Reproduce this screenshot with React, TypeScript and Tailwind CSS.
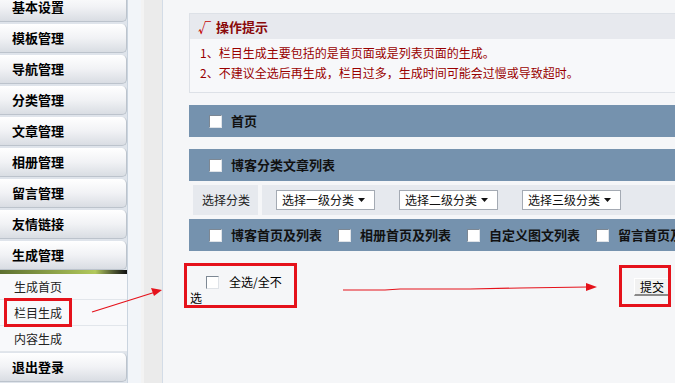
const menus = ['基本设置', '模板管理', '导航管理', '分类管理', '文章管理', '相册管理', '留言管理', '友情链接']
const subMenus = ['生成首页', '栏目生成', '内容生成']
const listItems = ['博客首页及列表', '相册首页及列表', '自定义图文列表', '留言首页及列表']
const selects = ['选择一级分类', '选择二级分类', '选择三级分类']

function MenuButton({ label, last }: { label: string; last?: boolean }) {
  return (
    <div
      className={`h-[29px] ${last ? '' : 'mb-[2px]'} flex items-center pl-[12px] rounded-r-[5px] border-r border-b border-[#bcc3cc] bg-linear-to-b from-white via-[#f1f2f5] to-[#d9dde3] text-[13px] font-bold text-black`}
    >
      {label}
    </div>
  )
}

function Box() {
  return (
    <span className="inline-block w-[13px] h-[13px] shrink-0 bg-white border border-t-[#7d8894] border-l-[#7d8894] border-r-[#dfe3e8] border-b-[#dfe3e8]" />
  )
}

function FakeSelect({ label }: { label: string }) {
  return (
    <div className="w-[99px] h-[20px] shrink-0 bg-white border border-[#a4aab3] flex items-center pl-[5px] text-[12px] text-[#111]">
      <span className="flex-1">{label}</span>
      <svg width="7" height="4" className="mr-[9px]">
        <path d="M0 0h7L3.5 4z" fill="#111" />
      </svg>
    </div>
  )
}

export default function App() {
  return (
    <div className="relative w-[675px] h-[383px] overflow-hidden flex bg-[#f5f6f8] font-['Noto_Sans_CJK_SC','Liberation_Sans',sans-serif]">
      {/* sidebar */}
      <aside className="w-[128px] shrink-0 bg-[#dfe4eb] border-r border-[#cad4df] flex flex-col">
        <div className="-mt-[7px]">
          {menus.map((m) => (
            <MenuButton key={m} label={m} />
          ))}
          <MenuButton label="生成管理" last />
        </div>
        <div className="h-[4px] bg-linear-to-r from-[#5d7030] via-[#b2c95c] via-75% to-[#111]" />
        <div className="bg-[#f8f9fb]">
          {subMenus.map((s) => (
            <div
              key={s}
              className="relative h-[26px] flex items-center pl-[14px] border-b border-[#e2e6eb] text-[12px] text-[#222]"
            >
              {s}
              {s === '栏目生成' && (
                <span className="absolute left-[4px] -top-[2px] w-[68px] h-[29px] border-[3px] border-[#e5121b]" />
              )}
            </div>
          ))}
        </div>
        <div className="mt-[1px]">
          <MenuButton label="退出登录" last />
        </div>
      </aside>

      <div className="w-[13px] shrink-0 bg-[#f2f5f9]" />
      <div className="w-[22px] shrink-0 bg-[#ebebeb] border-l-[3px] border-[#f3f3f3] border-r border-r-[#d3dce7]" />

      {/* main */}
      <main className="flex-1 min-w-0 pl-[26px] pt-[13px]">
        <div className="w-[560px]">
          <div className="border border-[#dde1e7] bg-[#f7f8fa]">
            <div className="h-[25px] bg-[#e7e9ee] flex items-center pl-[8px] text-[13px] font-bold text-[#8a0a0a]">
              <span className="w-[18px] text-[#c40000]">√</span>
              操作提示
            </div>
            <div className="pl-[10px] pt-[4px] pb-[9px] text-[12px] leading-[20px] text-[#990000]">
              <p>1、栏目生成主要包括的是首页面或是列表页面的生成。</p>
              <p>2、不建议全选后再生成，栏目过多，生成时间可能会过慢或导致超时。</p>
            </div>
          </div>

          <div className="mt-[12px] h-[32px] bg-[#7592ae] flex items-center pl-[20px] text-[13px] font-bold text-[#111]">
            <Box />
            <span className="ml-[9px]">首页</span>
          </div>

          <div className="mt-[12px] h-[32px] bg-[#7592ae] flex items-center pl-[20px] text-[13px] font-bold text-[#111]">
            <Box />
            <span className="ml-[9px]">博客分类文章列表</span>
          </div>

          <div className="h-[38px] flex gap-[4px] p-[4px] text-[12px] text-[#222]">
            <div className="w-[65px] shrink-0 bg-[#e6e9ee] flex items-center pl-[9px]">选择分类</div>
            <div className="flex-1 bg-[#e6e9ee] flex items-center pl-[14px] gap-[24px]">
              {selects.map((s) => (
                <FakeSelect key={s} label={s} />
              ))}
            </div>
          </div>

          <div className="h-[32px] bg-[#7592ae] flex items-center pl-[20px] text-[13px] font-bold text-[#111] whitespace-nowrap">
            {listItems.map((t) => (
              <div key={t} className="flex items-center mr-[16px]">
                <Box />
                <span className="ml-[9px]">{t}</span>
              </div>
            ))}
          </div>

          <div className="mt-[12px] -ml-[5px] flex items-start">
            <div className="w-[113px] h-[45px] shrink-0 border-[3px] border-[#e5121b] pt-[8px] pl-[3px] text-[12px] text-black">
              <div className="h-[16px] flex items-center pl-[16px]">
                <Box />
                <span className="ml-[10px]">全选/全不</span>
              </div>
              <div className="leading-[15px]">选</div>
            </div>
            <div className="ml-[322px] mt-[2px] w-[52px] h-[42px] shrink-0 border-[3px] border-[#e5121b] overflow-hidden">
              <div className="ml-[12px] mt-[10px] w-[34px] h-[18px] bg-[#f1f1f1] border-t border-l border-white border-b-2 border-b-[#8a8a8a] pl-[5px] text-[12px] leading-[15px] text-black">
                提交
              </div>
            </div>
          </div>
        </div>
      </main>

      {/* annotation arrows */}
      <svg className="absolute inset-0 pointer-events-none" width="675" height="383">
        <line x1="92" y1="312" x2="154" y2="292.5" stroke="#e5121b" strokeWidth="1.2" />
        <path d="M162 290 L151 288 L154 296 Z" fill="#e5121b" />
        <polyline
          points="343,290 385,290 400,289 470,289 520,288 588,287"
          fill="none"
          stroke="#e5121b"
          strokeWidth="1.2"
        />
        <path d="M597 287 L586 283 L586 291 Z" fill="#e5121b" />
      </svg>
    </div>
  )
}
